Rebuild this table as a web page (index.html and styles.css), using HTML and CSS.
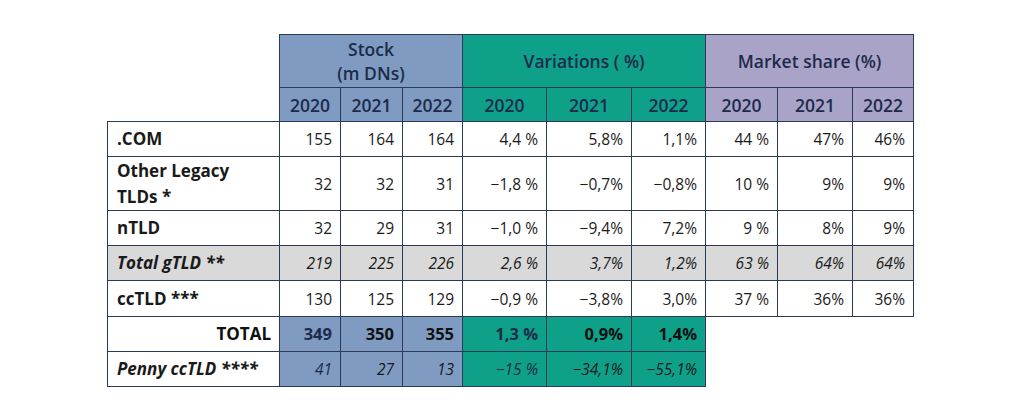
FILE: index.html
```html
<!DOCTYPE html>
<html>
<head>
<meta charset="utf-8">
<link rel="stylesheet" href="styles.css">
</head>
<body>
<table class="tld">
  <colgroup>
    <col class="c-label">
    <col class="c-s1"><col class="c-s2"><col class="c-s3">
    <col class="c-v1"><col class="c-v2"><col class="c-v3">
    <col class="c-m1"><col class="c-m2"><col class="c-m3">
  </colgroup>
  <thead>
    <tr class="h1">
      <th class="blank"></th>
      <th colspan="3" class="stock">Stock<br>(m DNs)</th>
      <th colspan="3" class="var">Variations ( %)</th>
      <th colspan="3" class="mkt">Market share (%)</th>
    </tr>
    <tr class="h2">
      <th class="blank"></th>
      <th class="stock">2020</th><th class="stock">2021</th><th class="stock">2022</th>
      <th class="var">2020</th><th class="var">2021</th><th class="var">2022</th>
      <th class="mkt">2020</th><th class="mkt">2021</th><th class="mkt">2022</th>
    </tr>
  </thead>
  <tbody>
    <tr class="r35">
      <td class="lbl">.COM</td>
      <td>155</td><td>164</td><td>164</td>
      <td>4,4 %</td><td>5,8%</td><td>1,1%</td>
      <td>44 %</td><td>47%</td><td>46%</td>
    </tr>
    <tr class="r54">
      <td class="lbl">Other Legacy<br>TLDs *</td>
      <td>32</td><td>32</td><td>31</td>
      <td>−1,8 %</td><td>−0,7%</td><td>−0,8%</td>
      <td>10 %</td><td>9%</td><td>9%</td>
    </tr>
    <tr class="r35">
      <td class="lbl">nTLD</td>
      <td>32</td><td>29</td><td>31</td>
      <td>−1,0 %</td><td>−9,4%</td><td>7,2%</td>
      <td>9 %</td><td>8%</td><td>9%</td>
    </tr>
    <tr class="r35 grey">
      <td class="lbl">Total gTLD **</td>
      <td>219</td><td>225</td><td>226</td>
      <td>2,6 %</td><td>3,7%</td><td>1,2%</td>
      <td>63 %</td><td>64%</td><td>64%</td>
    </tr>
    <tr class="r36">
      <td class="lbl">ccTLD ***</td>
      <td>130</td><td>125</td><td>129</td>
      <td>−0,9 %</td><td>−3,8%</td><td>3,0%</td>
      <td>37 %</td><td>36%</td><td>36%</td>
    </tr>
    <tr class="r35 total">
      <td class="lbl right">TOTAL</td>
      <td class="stock navy">349</td><td class="stock">350</td><td class="stock">355</td>
      <td class="var navy">1,3 %</td><td class="var">0,9%</td><td class="var">1,4%</td>
      <td class="blank" colspan="3"></td>
    </tr>
    <tr class="r35 penny">
      <td class="lbl">Penny ccTLD ****</td>
      <td class="stock navy">41</td><td class="stock">27</td><td class="stock">13</td>
      <td class="var navy">−15 %</td><td class="var">−34,1%</td><td class="var">−55,1%</td>
      <td class="blank" colspan="3"></td>
    </tr>
  </tbody>
</table>
</body>
</html>
```

FILE: styles.css
```css
html, body {
  margin: 0;
  padding: 0;
  background: #ffffff;
}

body {
  padding: 34px 0 0 107px;
  font-family: "Open Sans", "Liberation Sans", sans-serif;
  color: #1a1a1a;
}

.tld {
  border-collapse: collapse;
  table-layout: fixed;
  width: 806px;
  font-size: 15.5px;
}

.c-label { width: 172px; }
.c-s1 { width: 61px; }
.c-s2 { width: 62px; }
.c-s3 { width: 60px; }
.c-v1 { width: 84px; }
.c-v2 { width: 85px; }
.c-v3 { width: 74px; }
.c-m1 { width: 72px; }
.c-m2 { width: 75px; }
.c-m3 { width: 61px; }

.tld th,
.tld td {
  border: 1px solid #2c3a5a;
  padding: 0 8px;
  box-sizing: border-box;
}

.tld th {
  color: #1d2b4b;
  font-weight: 600;
  text-align: center;
  font-size: 17.5px;
  line-height: 24px;
}

.tld .blank {
  border: none;
  background: transparent;
}

.h1 th { height: 53px; }
.h2 th { height: 34px; }

.stock { background: #7f9bc1; }
.var { background: #0ea089; }
.mkt { background: #a9a3c8; }

.tld td {
  text-align: right;
  line-height: 22px;
}

.tld td.lbl {
  text-align: left;
  font-weight: 700;
  font-size: 17px;
  padding-left: 9px;
  line-height: 26px;
  white-space: nowrap;
}

.tld td.right { text-align: right; }

.r35 td { height: 35px; }
.r36 td { height: 36px; }
.r54 td { height: 54px; }

.grey td { background: #d9d9d9; font-style: italic; }

.total td { font-weight: 700; color: #111111; font-size: 16.5px; }
.penny td { font-style: italic; }

.tld td.navy { color: #1d2b4b; }
```
